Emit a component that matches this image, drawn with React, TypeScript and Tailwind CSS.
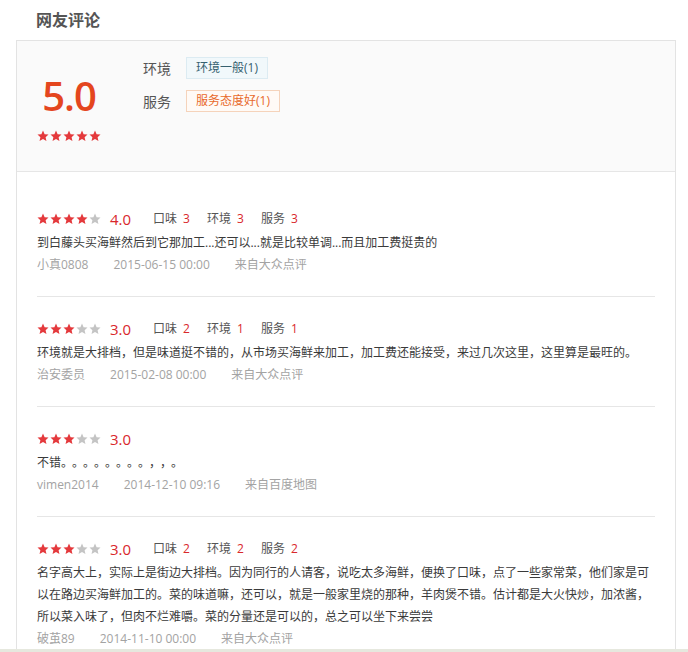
import React from 'react';

type Review = {
  stars: number;
  score: string;
  subs?: { label: string; value: number }[];
  text: string;
  tail?: string;
  user: string;
  date: string;
  source: string;
};

const reviews: Review[] = [
  {
    stars: 4,
    score: '4.0',
    subs: [
      { label: '口味', value: 3 },
      { label: '环境', value: 3 },
      { label: '服务', value: 3 },
    ],
    text: '到白藤头买海鲜然后到它那加工...还可以...就是比较单调...而且加工费挺贵的',
    user: '小真0808',
    date: '2015-06-15 00:00',
    source: '来自大众点评',
  },
  {
    stars: 3,
    score: '3.0',
    subs: [
      { label: '口味', value: 2 },
      { label: '环境', value: 1 },
      { label: '服务', value: 1 },
    ],
    text: '环境就是大排档，但是味道挺不错的，从市场买海鲜来加工，加工费还能接受，来过几次这里，这里算是最旺的。',
    user: '治安委员',
    date: '2015-02-08 00:00',
    source: '来自大众点评',
  },
  {
    stars: 3,
    score: '3.0',
    text: '不错',
    tail: '。。。。。。。。，，。',
    user: 'vimen2014',
    date: '2014-12-10 09:16',
    source: '来自百度地图',
  },
  {
    stars: 3,
    score: '3.0',
    subs: [
      { label: '口味', value: 2 },
      { label: '环境', value: 2 },
      { label: '服务', value: 2 },
    ],
    text: '名字高大上，实际上是街边大排档。因为同行的人请客，说吃太多海鲜，便换了口味，点了一些家常菜，他们家是可以在路边买海鲜加工的。菜的味道嘛，还可以，就是一般家里烧的那种，羊肉煲不错。估计都是大火快炒，加浓酱，所以菜入味了，但肉不烂难嚼。菜的分量还是可以的，总之可以坐下来尝尝',
    user: '破茧89',
    date: '2014-11-10 00:00',
    source: '来自大众点评',
  },
];

const Stars: React.FC<{ count: number }> = ({ count }) => (
  <div className="flex gap-px">
    {[0, 1, 2, 3, 4].map((i) => (
      <svg key={i} viewBox="0 0 24 24" className="w-3 h-3">
        <polygon
          points="12,1 15.2,8.3 23,9 17.2,14.3 18.9,22 12,18 5.1,22 6.8,14.3 1,9 8.8,8.3"
          fill={i < count ? '#e4393c' : '#c4c4c4'}
        />
      </svg>
    ))}
  </div>
);

const ReviewItem: React.FC<{ review: Review }> = ({ review }) => (
  <div className="pt-[21px] pb-[20px] border-b border-[#e6e6e6]">
    <div className="flex items-center h-[22px]">
      <Stars count={review.stars} />
      <span className="ml-[9px] text-[15px] text-[#d9282c] leading-none">{review.score}</span>
      {review.subs && (
        <div className="flex ml-[22px] gap-[17px] text-[12px] text-[#555]">
          {review.subs.map((s) => (
            <span key={s.label}>
              {s.label}
              <span className="ml-[6px] text-[#d9282c]">{s.value}</span>
            </span>
          ))}
        </div>
      )}
    </div>
    <p className="mt-[2px] text-[12px] leading-[22px] text-[#3a3a3a]">
      {review.text}
      {review.tail && <span className="tracking-[5px]">{review.tail}</span>}
    </p>
    <div className="flex gap-[25px] text-[12px] leading-[22px] text-[#a3a3a3]">
      <span>{review.user}</span>
      <span>{review.date}</span>
      <span>{review.source}</span>
    </div>
  </div>
);

export default function App() {
  return (
    <div
      className="w-[688px] h-[652px] overflow-hidden flex flex-col bg-white"
      style={{ fontFamily: '"Open Sans", "Noto Sans CJK SC", sans-serif' }}
    >
      <h2 className="h-10 pl-[36px] leading-[40px] text-[16px] font-bold text-[#555]">网友评论</h2>
      <div className="ml-[16px] w-[660px] flex-1 overflow-hidden border-t border-l border-r border-[#e3e3e3]">
        <div className="h-[131px] bg-[#fafafa] border-b border-[#e6e6e6] flex pl-[20px]">
          <div className="w-[64px] flex flex-col items-center pt-[31px]">
            <span className="text-[40px] leading-[48px] font-semibold tracking-[-1px] text-[#e4461e]">5.0</span>
            <div className="mt-[10px]">
              <Stars count={5} />
            </div>
          </div>
          <div className="ml-[42px] pt-[16px] flex flex-col gap-[11px]">
            <div className="flex items-center h-[22px]">
              <span className="w-[43px] text-[14px] text-[#555]">环境</span>
              <span className="h-[22px] px-[9px] leading-[20px] text-[12px] text-[#35606f] bg-[#f1f8fb] border border-[#dcebf2]">
                环境一般(1)
              </span>
            </div>
            <div className="flex items-center h-[22px]">
              <span className="w-[43px] text-[14px] text-[#555]">服务</span>
              <span className="h-[22px] px-[9px] leading-[20px] text-[12px] text-[#e8692a] bg-[#fffaf6] border border-[#f5d3bb]">
                服务态度好(1)
              </span>
            </div>
          </div>
        </div>
        <div className="pt-[15px] px-[20px]">
          {reviews.map((r, i) => (
            <ReviewItem key={i} review={r} />
          ))}
        </div>
      </div>
      <div className="h-[3px] bg-[#e6e8de]" />
    </div>
  );
}
